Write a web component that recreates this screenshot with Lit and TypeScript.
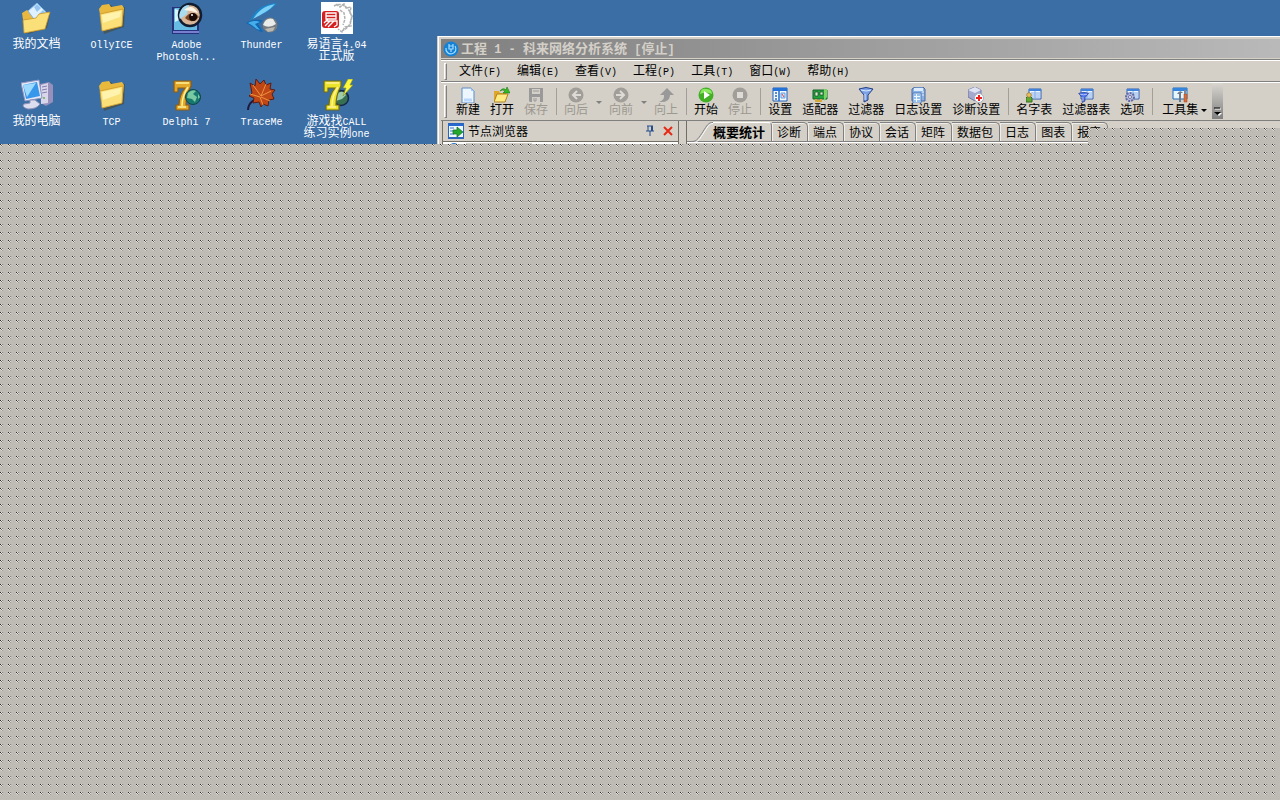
import { LitElement, html, css, svg, nothing } from "lit";
import { customElement, property } from "lit/decorators.js";

/* Latin runs take the half-width face, everything else the CJK face. */
const mixed = (s: string) =>
  s.split(/([\x20-\x7e]+)/).filter(Boolean).map((p) =>
    /^[\x20-\x7e]/.test(p) ? html`<span class="latin">${p}</span>` : p);

const folder = svg`
  <path d="M3 8l5-5 6-1 3 3 11-1-1 20-20 7z" fill="#4b3f1c" opacity=".5" transform="translate(1 1)"/>
  <path d="M3 7l3-4 7-1 2 3 11-2 2 3-2 18-19 5z" fill="#e8b93c"/>
  <path d="M4 12l23-5-1 17-20 5z" fill="#fbe07a" stroke="#c9962a" stroke-width=".8"/>
  <path d="M6 13l19-4-1 6-17 6z" fill="#fff3ae"/>`;

const seven = (main: string, dark: string) => svg`
  <path d="M3 2h17v5c-4 7-5 12-5 19h3v5H5v-5h3c0-7 2-12 6-17H7v4H3z" fill="${main}" stroke="${dark}" stroke-width="1.2"/>
  <path d="M5 4h13M17 8c-4 6-6 11-6 19M7 28h8" fill="none" stroke="#fff29a" stroke-width="1.5"/>`;

const bigIcons: Record<string, unknown> = {
  docs: svg`
    <path d="M3 12l5-3 5 2 15 1-3 14-19 6z" fill="#4b3f1c" opacity=".5" transform="translate(1 0)"/>
    <path d="M1 11l5-3 4 3 15-1-2 17-19 4z" fill="#eab83e"/>
    <path d="M7 9l9-8 11 11-9 12z" fill="#dff0ff" stroke="#7fb4e8"/>
    <path d="M13 5l3-3 4 4-4 4zM18 12l4-4 4 4-4 5z" fill="#93c5f2"/>
    <path d="M2 18l13-2 3-4 11-2-5 17-21 4z" fill="#fbdf79" stroke="#c8942a" stroke-width=".8"/>`,
  folder,
  photo: svg`
    <path d="M1 5h27v27H1z" fill="#26327e"/>
    <path d="M3 7l1-1h22v22H3z" fill="#67bce4"/>
    <path d="M4 7l10 3-4 7-6 3z" fill="#d8f4ff"/>
    <path d="M2 29h26v2H2z" fill="#7780cf"/>
    <circle cx="19" cy="13" r="11" fill="#d9b597" stroke="#111c30" stroke-width="2.500"/>
    <path d="M10 8q3-5 8-5l-2 9-7 5q-2-4 1-9z" fill="#a9dcf0"/>
    <path d="M13 8q8-7 14 3l-7-2z" fill="#fff6e8"/>
    <path d="M14 16q6-9 14-1-7 8-14 1z" fill="#7d4424"/>
    <circle cx="22" cy="15" r="4" fill="#180b08"/><circle cx="21" cy="13" r="1" fill="#fff"/>`,
  thunder: svg`
    <path d="M31 1C15 2 8 10 4 19c5-6 18-6 27-18z" fill="#1b86cc"/>
    <path d="M29 2C17 4 11 11 7 17 16 12 23 9 29 2z" fill="#7dd0f6"/>
    <path d="M0 21c6-4 13-4 17-2l-5 3 5 8C10 29 7 24 0 21z" fill="#0d68b2"/>
    <path d="M2 21c5-3 10-2 12-1l-5 2 5 6c-5-1-7-5-12-7z" fill="#44adea"/>
    <circle cx="24" cy="23" r="7.500" fill="#777c80"/>
    <path d="M17 23q3-8 10-6l3 5q-7 5-13 1z" fill="#e9eceb"/>
    <path d="M19 27l10-2-2 4-5 1z" fill="#bab8b1"/>`,
  yi: svg`
    <path d="M0 0h32v32H0z" fill="#fff"/>
    <path d="M13 4q7-4 13 2t4 13-9 10M15 2l4 3 4-3 2 4 5-1-1 6 3 4-3 4 1 5-6 1-3 5-4-3M19 8l4 3 1 6-2 6" fill="none" stroke="#b0b0b0" stroke-width="1.500" stroke-dasharray="3 1"/>
    <rect x="1" y="9" width="17" height="17" rx="3" fill="#d52020"/>
    <path d="M5 11h10v6H5zM5 14h10M7 17l-4 4M5 19h11v4l-3 2M9 19l-5 5M13 19l-6 6" fill="none" stroke="#fff" stroke-width="1.300"/>`,
  computer: svg`
    <path d="M19 5l9-2 4 3v17l-7 4-5-3z" fill="#9690ba"/>
    <path d="M20 6l7-2v20l-7 1z" fill="#d9d6ec"/>
    <path d="M21 8l5-1M21 11l5-1M21 14l5-1" stroke="#817dae"/>
    <circle cx="23" cy="19" r="1" fill="#68b058"/>
    <path d="M0 4l18-3 3 18-17 3z" fill="#e5e8f6" stroke="#8e94bf"/>
    <path d="M2 6l14-3 3 14-14 3z" fill="#3798eb"/><path d="M2 6l13-2-9 14z" fill="#9cdaff"/>
    <path d="M9 21h5l5 4q-3 5-12 5-7-2-4-5l6-1z" fill="#ddddf0" stroke="#8e91b7"/>`,
  delphi: svg`${seven("#e3a72a", "#8e5d12")}
    <circle cx="22" cy="18" r="7.500" fill="#16786f" stroke="#10454a"/>
    <path d="M17 14q4-4 8-2l-3 3 4 3-2 5-3-3-5-1zM27 15l2 3-2 2z" fill="#79c9a2"/>`,
  leaf: svg`
    <path d="M2 31q0-6 6-10l7-5" fill="none" stroke="#20183c" stroke-width="2"/>
    <path d="M4 4l5 3 1-7 4 5 4-4 2 5 5-2-1 6 5 1-3 4 2 5-5 1-1 6-5-2-2 3-2-5-6 1 1-5-5-2 3-3z" fill="#bf4716" stroke="#5c1c13"/>
    <path d="M7 6l8 11 5-12M15 17l10-5M14 18L4 15M15 18l9 4M14 18l3 8" fill="none" stroke="#ef9440"/>`,
  game: svg`
    <circle cx="20" cy="19" r="7.500" fill="#376f51" stroke="#16264c" stroke-width="1.500"/>
    <path d="M16 15q6-5 9 1l-4 4-6 2z" fill="#9fcbb0"/>${seven("#ece32b", "#736b16")}
    <path d="M27 0h5l-3 6h3L22 17l3-8h-3z" fill="#fff83d" stroke="#8c9420" stroke-width=".7"/>`,
};

const card = svg`<path d="M3 2h12v10H3z" fill="#eef5ff" stroke="#315fae"/><path d="M3 2h12v2H3z" fill="#3f83dd"/><path d="M5 6h9M5 8h9M5 10h9M9 4v8" stroke="#85aee6"/>`;
const funnel = (c: string) => svg`<path d="M1 2q7-3 14 0l-5 6v5l-4 2V8z" fill="${c}" stroke="#263f87"/><path d="M3 3q5 2 10 0M7 7v6" fill="none" stroke="#dce9ff"/>`;

const smallIcons: Record<string, unknown> = {
  new: svg`<path d="M2 1h9l3 3v12H2z" fill="#edf6ff" stroke="#5c8cc4"/><path d="M11 1v3h3z" fill="#a6caef"/><path d="M4 13h8" stroke="#b8d7fb" stroke-width="3"/>`,
  open: svg`<path d="M0 4h5l1 2h6v8H0z" fill="#e1a728"/><path d="M0 15l3-8h11l-3 8z" fill="#ffeb83" stroke="#b18120"/><path d="M6 4q3-4 6-1l1-3 3 6h-7l2-2q-2-2-5 0z" fill="#36ba24" stroke="#167c14" stroke-width=".6"/>`,
  save: svg`<path d="M1 1h14v14H2l-1-1z" fill="#999"/><path d="M4 2h8v5H4zM4 10h8v5H4z" fill="#d4d0c8"/><path d="M5 4h6M6 11v3h2v-3" stroke="#999" fill="none"/>`,
  back: svg`<circle cx="8" cy="8" r="7.500" fill="#a19e99"/><path d="M13 8H5m4-4L5 8l4 4" fill="none" stroke="#dedbd6" stroke-width="2"/>`,
  forward: svg`<circle cx="8" cy="8" r="7.500" fill="#a19e99"/><path d="M3 8h8M7 4l4 4-4 4" fill="none" stroke="#dedbd6" stroke-width="2"/>`,
  up: svg`<path d="M9 1l7 7h-4q0 8-11 7 6-2 5-7H2z" fill="#999"/>`,
  start: svg`<circle cx="8" cy="8" r="7.500" fill="#42af25"/><path d="M2 7q1-6 6-5 6 0 6 5-6-3-12 0z" fill="#8ce861"/><path d="M6 4l6 4-6 4z" fill="#fff"/>`,
  stop: svg`<circle cx="8" cy="8" r="7.500" fill="#a19e99"/><path d="M5 5h6v6H5z" fill="#dedbd6"/>`,
  settings: svg`<path d="M1 1h14v13H1z" fill="#f3f8ff" stroke="#205eb7"/><path d="M1 1h14v3H1z" fill="#2272d9"/><path d="M7 4v10M3 6h2M3 9h2M3 12h2" stroke="#206cc9" stroke-width="1.500"/><path d="M9 6h4v5H9z" fill="#d3e5ff" stroke="#679bdd"/><path d="M10 7l2 3" stroke="#d94444"/>`,
  adapter: svg`<path d="M1 3h14v9H1z" fill="#24a23c" stroke="#12602a"/><path d="M3 5h3v4H3zM8 5h3v3H8z" fill="#d9ecd2" stroke="#17451f" stroke-width=".7"/><path d="M12 2h3v8l-3 4z" fill="#79d463"/><path d="M4 12v2h5v-2" fill="none" stroke="#d6a83b" stroke-width="2"/>`,
  filter: funnel("#7ba2e5"),
  log: svg`<path d="M2 2l3-2h8l2 2v12H2z" fill="#8bb0e3" stroke="#4869a2"/><path d="M4 1h9v3H4z" fill="#dcecff"/><path d="M3 6h8v10H3z" fill="#eff7ff" stroke="#4d78b7"/><path d="M4 8h2M7 8h3M4 11h2M7 11h3M4 14h2M7 14h3" stroke="#3d87da"/><path d="M12 5h2M12 8h2" stroke="#e6f1ff"/>`,
  diagnose: svg`<path d="M0 3l7-3 6 3v7l-6 4-7-4z" fill="#a4a9cd" stroke="#7076a3"/><path d="M0 3l7 3 6-3-6-3z" fill="#dfe3f4"/><circle cx="11" cy="11" r="4.500" fill="#fff" stroke="#a5acc4"/><path d="M11 8v6M8 11h6" stroke="#ed2020" stroke-width="2"/>`,
  names: svg`${card}<path d="M0 11q3-4 6 0v4H0z" fill="#62aa2f" stroke="#376d20"/><circle cx="3" cy="8" r="2.300" fill="#edbf58" stroke="#886428" stroke-width=".6"/>`,
  filters: svg`${card}<g transform="translate(0 5) scale(.7)">${funnel("#4f72ee")}</g>`,
  options: svg`${card}<circle cx="6" cy="10" r="4" fill="#b8bddf" stroke="#626aa2" stroke-width="2" stroke-dasharray="2 1"/><circle cx="6" cy="10" r="1.500" fill="#fff" stroke="#6b719e"/>`,
  tools: svg`<path d="M1 1h14v11H1z" fill="#e7f5ff" stroke="#226bb9"/><path d="M1 1h14v3H1z" fill="#3485dd"/><path d="M5 7q3-5 6-1H9v9H7V7z" fill="#6e7b89"/><path d="M12 7h3v8h-3z" fill="#da6c38" stroke="#9e4420" stroke-width=".5"/><path d="M13 3v4" stroke="#7a8999" stroke-width="2"/>`,
  app: svg`<circle cx="8" cy="8" r="7.500" fill="#1481d4"/><path d="M3 7a5 5 0 1 0 9-2M6 3v5h4V3M6 5h4M8 8v3" fill="none" stroke="#a6deff" stroke-width="1.200"/>`,
  browser: svg`<path d="M0 1h16v14H0z" fill="#eef6ff" stroke="#2e63bb" stroke-width="2"/><path d="M0 1h16v2H0z" fill="#2769ce"/><path d="M2 5h4M2 8h3M2 11h4" stroke="#3f77c4"/><path d="M5 7h4V4l6 5-6 5v-3H5z" fill="#25a72f" stroke="#126b20" stroke-width=".7"/>`,
  pin: svg`<path d="M5 3h6M6 3v5M10 3v5M4 8h8M8 8v5" fill="none" stroke="#244d8b"/><path d="M9 3h2v5H9z" fill="#244d8b"/>`,
  close: svg`<path d="M4 4l8 8M12 4l-8 8" stroke="#e62814" stroke-width="2"/>`,
};

@customElement("ui-icon")
class UiIcon extends LitElement {
  @property() name = "";
  @property({ type: Number }) size = 16;
  static styles = css`
    :host { display: block; line-height: 0; }
    svg { display: block; }
  `;
  render() {
    const set = this.size === 32 ? bigIcons : smallIcons;
    return html`<svg width=${this.size} height=${this.size} viewBox="0 0 ${this.size} ${this.size}" aria-hidden="true">${set[this.name]}</svg>`;
  }
}

/* A surface that has not been repainted: grey with an 8px halftone grid. */
@customElement("stale-area")
class StaleArea extends LitElement {
  static styles = css`
    :host { display: flex; overflow: hidden; }
    svg { display: block; flex: 1; min-height: 0; }
  `;
  render() {
    return html`<svg aria-hidden="true" shape-rendering="crispEdges">
      <defs><pattern id="dots" width="8" height="8" patternUnits="userSpaceOnUse">
        <path d="M0 0h8v8H0z" fill="#bfbbb5"/>
        <path d="M3 0h1v1H3zM5 1h1v1H5zM4 4h1v1H4zM6 6h1v1H6zM1 5h1v1H1z" fill="#b9b6b1"/>
        <path d="M0 0h1v1H0z" fill="#2c2c2c"/>
        <path d="M1 1h1v1H1z" fill="#686663"/>
        <path d="M2 0h1v1H2z" fill="#84817d"/>
        <path d="M2 2h1v1H2z" fill="#999691"/>
        <path d="M1 0h1v1H1zM0 1h1v1H0zM2 1h1v1H2zM1 2h1v1H1z" fill="#e2e0dd"/>
      </pattern></defs>
      <rect width="100%" height="100%" fill="url(#dots)"/>
    </svg>`;
  }
}

const shortcuts: [string, string[]][] = [
  ["docs", ["我的文档"]], ["folder", ["OllyICE"]], ["photo", ["Adobe", "Photosh..."]],
  ["thunder", ["Thunder"]], ["yi", ["易语言4.04", "正式版"]],
  ["computer", ["我的电脑"]], ["folder", ["TCP"]], ["delphi", ["Delphi 7"]],
  ["leaf", ["TraceMe"]], ["game", ["游戏找CALL", "练习实例one"]],
];

const menus = ["文件(F)", "编辑(E)", "查看(V)", "工程(P)", "工具(T)", "窗口(W)", "帮助(H)"];

type Tool = { icon: string; label: string; off?: boolean; drop?: boolean };
const tools: Tool[][] = [
  [{ icon: "new", label: "新建" }, { icon: "open", label: "打开" }, { icon: "save", label: "保存", off: true }],
  [{ icon: "back", label: "向后", off: true, drop: true }, { icon: "forward", label: "向前", off: true, drop: true }, { icon: "up", label: "向上", off: true }],
  [{ icon: "start", label: "开始" }, { icon: "stop", label: "停止", off: true }],
  [{ icon: "settings", label: "设置" }, { icon: "adapter", label: "适配器" }, { icon: "filter", label: "过滤器" }, { icon: "log", label: "日志设置" }, { icon: "diagnose", label: "诊断设置" }],
  [{ icon: "names", label: "名字表" }, { icon: "filters", label: "过滤器表" }, { icon: "options", label: "选项" }],
];

const tabs = ["诊断", "端点", "协议", "会话", "矩阵", "数据包", "日志", "图表", "报表"];

@customElement("app-root")
class AppRoot extends LitElement {
  static styles = css`
    :host {
      display: flex; flex-direction: column; min-height: 100vh; overflow: hidden;
      background: #3a6ea5; color: #000;
      font: 12px/12px "Noto Sans CJK SC", sans-serif;
    }
    * { box-sizing: border-box; }
    button, a { font: inherit; color: inherit; text-decoration: none; }
    button { border: 0; padding: 0; margin: 0; background: none; white-space: nowrap; }
    .latin { font-family: "Liberation Mono", monospace; font-size: 10px; white-space: pre; }
    .top { display: flex; height: 144px; overflow: hidden; position: relative; }
    .desk { display: grid; grid-template-columns: repeat(5, 75px); grid-auto-rows: 77px; width: 437px; flex: none; padding-top: 2px; }
    .shortcut { display: flex; flex-direction: column; align-items: center; gap: 3px; padding-right: 2px; color: #fff; text-align: center; white-space: nowrap; }
    .line { display: block; height: 12px; }
    .win { flex: 1; min-width: 0; margin-top: 36px; padding: 2px 0 0 2px; background: #d4d0c8; border-left: 1px solid #d4d0c8; box-shadow: inset 1px 1px #fff; }
    .body { padding-left: 1px; }
    .title { display: flex; align-items: center; gap: 2px; height: 21px; margin-left: 1px; padding: 0 2px; background: linear-gradient(90deg, #808080, #b9b9b9); border: solid #d4d0c8; border-width: 1px 0; color: #d4d0c8; font-size: 13px; font-weight: bold; }
    .title .latin { font-size: 12px; }
    .menu { display: flex; align-items: center; height: 22px; border-top: 1px solid #808080; box-shadow: inset 0 1px #fff; padding: 1px 0 0 3px; }
    .grip { width: 3px; height: 17px; border: 1px solid; border-color: #fff #808080 #808080 #fff; margin-right: 4px; flex: none; }
    .menu button { padding: 0 8px; }
    .tools { display: flex; height: 40px; border-top: 1px solid #808080; border-bottom: 1px solid #808080; box-shadow: inset 0 1px #fff; padding: 1px 0 0 3px; align-items: stretch; }
    .tools .grip { height: 33px; align-self: center; }
    .tool { display: flex; flex-direction: column; align-items: center; justify-content: flex-start; padding: 4px 5px 0; }
    .tool:disabled { color: #9c9890; }
    .sep { width: 6px; padding: 5px 3px; flex: none; }
    .sep::before { content: ""; display: block; height: 27px; border-left: 1px solid #a29f98; }
    .drop { width: 11px; padding: 0 3px 16px; display: flex; align-items: flex-end; }
    .drop::before { content: ""; border: solid transparent; border-width: 3px 3px 0; border-top-color: #808080; }
    .wide { display: flex; align-items: stretch; padding: 0 5px 0 7px; gap: 3px; }
    .face { display: flex; flex-direction: column; align-items: center; padding-top: 4px; }
    .wide::after { content: ""; align-self: flex-end; margin-bottom: 8px; border: solid transparent; border-width: 3px 3px 0; border-top-color: #000; }
    .more { width: 11px; height: 36px; background: linear-gradient(#d9d6d0, #808080); display: flex; align-items: flex-end; justify-content: center; padding-bottom: 3px; }
    .panes { display: flex; gap: 7px; height: 26px; }
    .pane { flex: none; width: 237px; border: solid #716f64; border-width: 0 1px; margin-left: 1px; display: flex; flex-direction: column; background: #fff; }
    .head { display: flex; align-items: center; gap: 4px; height: 21px; flex: none; padding: 0 2px 0 5px; background: #d4d0c8; border-bottom: 1px solid #716f64; }
    .head h2 { flex: 1; font: inherit; margin: 0; }
    .head button + button { margin-left: -2px; }
    .rest { display: flex; gap: 8px; margin: 1px 0 0 7px; height: 4px; }
    .node { width: 8px; background: #2a78c4; border-radius: 4px 4px 0 0; }
    .row { width: 66px; background: #d4d0c8; }
    .views { flex: 1; min-width: 0; border-left: 1px solid #716f64; }
    .tabs { display: flex; height: 21px; padding: 1px 0 0 5px; border-bottom: 1px solid #808080; box-shadow: 0 1px #fff; background: #d4d0c8; }
    .tab { height: 19px; padding: 0 6px 0 5px; border: solid #808080; border-width: 1px 1px 0 0; border-radius: 0 5px 0 0; box-shadow: inset 1px 1px #efede8; }
    .first { display: flex; height: 20px; font-size: 13px; font-weight: bold; }
    .first svg { display: block; }
    .first span { height: 20px; padding: 3px 6px 0 0; border: solid #fff; border-width: 1px 1px 0 0; border-right-color: #808080; border-radius: 0 4px 0 0; }
    .gap { position: absolute; left: 1088px; right: 0; top: 128px; bottom: 0; }
    .bottom { flex: 1; }
  `;

  tool(t: Tool) {
    return html`<button class="tool" ?disabled=${t.off}><ui-icon name=${t.icon}></ui-icon>${t.label}</button>
      ${t.drop ? html`<button class="drop" ?disabled=${t.off} aria-label=${t.label}></button>` : nothing}`;
  }

  render() {
    return html`
      <div class="top">
        <nav class="desk">
          ${shortcuts.map(([icon, lines]) => html`<a class="shortcut" href="#">
            <ui-icon name=${icon} .size=${32}></ui-icon>
            <span>${lines.map((l) => html`<span class="line">${mixed(l)}</span>`)}</span></a>`)}
        </nav>
        <main class="win">
          <header class="title"><ui-icon name="app"></ui-icon><span>${mixed("工程 1 - 科来网络分析系统 [停止]")}</span></header>
          <div class="body">
            <nav class="menu"><span class="grip"></span>${menus.map((m) => html`<button>${mixed(m)}</button>`)}</nav>
            <div class="tools"><span class="grip"></span>
              ${tools.map((g) => html`${g.map((t) => this.tool(t))}<span class="sep"></span>`)}
              <button class="wide"><span class="face"><ui-icon name="tools"></ui-icon>工具集</span></button>
              <button class="more" aria-label="more"><svg width="8" height="9" viewBox="0 0 8 9"><path d="M1 2h6" stroke="#fff"/><path d="M2 6h6L5 9z" fill="#fff"/><path d="M0 1h6" stroke="#000"/><path d="M0 5h7L3.500 8z"/></svg></button>
            </div>
            <div class="panes">
              <section class="pane">
                <div class="head"><ui-icon name="browser"></ui-icon><h2>节点浏览器</h2>
                  <button aria-label="pin"><ui-icon name="pin"></ui-icon></button>
                  <button aria-label="close"><ui-icon name="close"></ui-icon></button></div>
                <div class="rest"><span class="node"></span><span class="row"></span></div>
              </section>
              <section class="views">
                <div class="tabs">
                  <button class="first"><svg width="21" height="20" viewBox="0 0 21 20"><path d="M0 19.500c5 0 7-4 11-10S16 .5 21 .5" fill="none" stroke="#808080"/><path d="M1 20.500c5 0 7-4 11-10S17 1.500 21 1.500" fill="none" stroke="#fff"/></svg><span>概要统计</span></button>
                  ${tabs.map((t) => html`<button class="tab">${t}</button>`)}
                </div>
              </section>
            </div>
          </div>
        </main>
        <stale-area class="gap"></stale-area>
      </div>
      <stale-area class="bottom"></stale-area>`;
  }
}
